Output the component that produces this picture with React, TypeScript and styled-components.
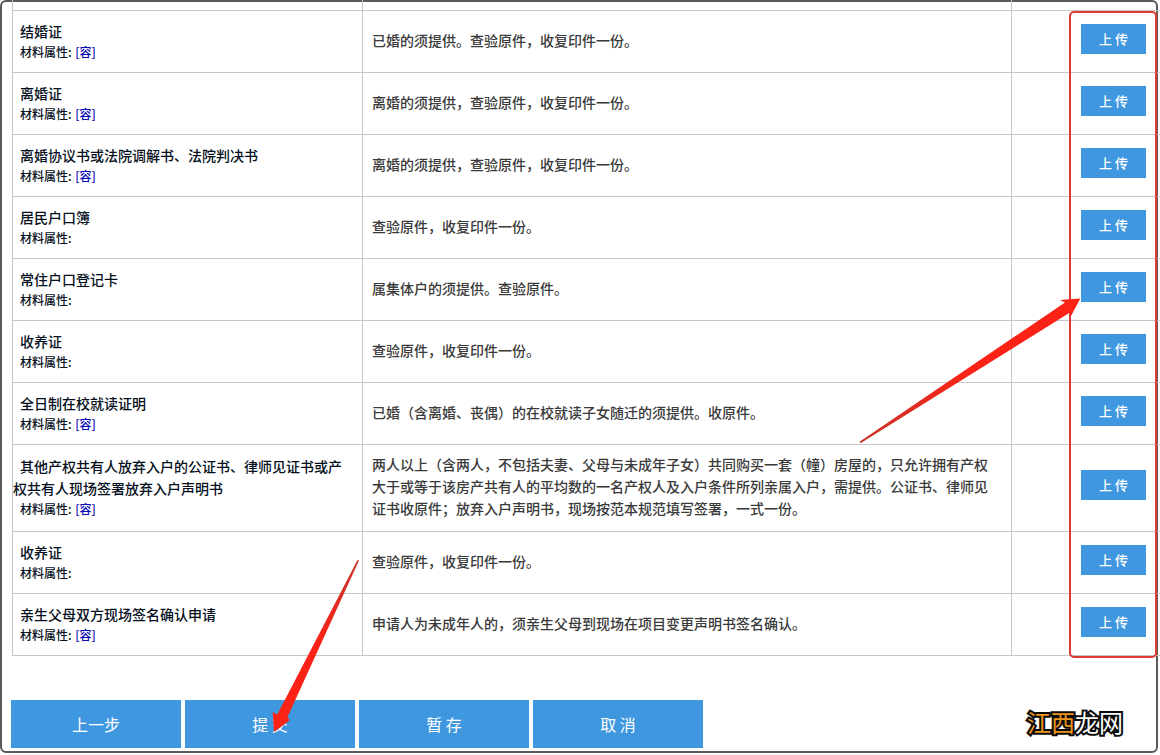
import React from "react";
import styled, { createGlobalStyle } from "styled-components";

const GlobalStyle = createGlobalStyle`
  * { box-sizing: border-box; }
  body {
    margin: 0;
    background: #fff;
    font-family: "Noto Sans CJK SC", "Microsoft YaHei", sans-serif;
  }
`;

interface Material {
  name: string;
  tag?: string;
  note: string;
}

const materials: Material[] = [
  { name: "结婚证", tag: "[容]", note: "已婚的须提供。查验原件，收复印件一份。" },
  { name: "离婚证", tag: "[容]", note: "离婚的须提供，查验原件，收复印件一份。" },
  { name: "离婚协议书或法院调解书、法院判决书", tag: "[容]", note: "离婚的须提供，查验原件，收复印件一份。" },
  { name: "居民户口簿", note: "查验原件，收复印件一份。" },
  { name: "常住户口登记卡", note: "属集体户的须提供。查验原件。" },
  { name: "收养证", note: "查验原件，收复印件一份。" },
  { name: "全日制在校就读证明", tag: "[容]", note: "已婚（含离婚、丧偶）的在校就读子女随迁的须提供。收原件。" },
  {
    name: "其他产权共有人放弃入户的公证书、律师见证书或产权共有人现场签署放弃入户声明书",
    tag: "[容]",
    note: "两人以上（含两人，不包括夫妻、父母与未成年子女）共同购买一套（幢）房屋的，只允许拥有产权大于或等于该房产共有人的平均数的一名产权人及入户条件所列亲属入户，需提供。公证书、律师见证书收原件；放弃入户声明书，现场按范本规范填写签署，一式一份。",
  },
  { name: "收养证", note: "查验原件，收复印件一份。" },
  { name: "亲生父母双方现场签名确认申请", tag: "[容]", note: "申请人为未成年人的，须亲生父母到现场在项目变更声明书签名确认。" },
];

const actions = ["上一步", "提 交", "暂 存", "取 消"];

const Page = styled.main`
  position: relative;
  min-height: 100vh;
  overflow: hidden;
`;

const Frame = styled.div`
  position: absolute;
  inset: 0 2px 2px 0;
  border: 2px solid #5a5a5a;
  border-radius: 6px;
  pointer-events: none;
`;

const TableArea = styled.section`
  position: relative;
  padding-left: 12px;
`;

const Table = styled.table`
  width: 100%;
  table-layout: fixed;
  border-spacing: 0;
  border-left: 1px solid #c6c6c6;
`;

const NameCol = styled.col`
  width: 350px;
`;

const ActionCol = styled.col`
  width: 148px;
`;

const Row = styled.tr`
  height: 62px;
`;

const StubCell = styled.td`
  height: 11px;
  padding: 0;
  border-bottom: 1px solid #c6c6c6;
  &:not(:last-child) { border-right: 1px solid #c6c6c6; }
`;

const NameCell = styled.th`
  padding: 0 10px 2px 0;
  border-right: 1px solid #c6c6c6;
  border-bottom: 1px solid #c6c6c6;
  color: #06101c;
  font-weight: 500;
  text-align: left;
  vertical-align: middle;
`;

const Name = styled.div`
  font-size: 14px;
  line-height: 22px;
  text-indent: 7px;
`;

const Attribute = styled.div`
  padding-left: 7px;
  font-size: 12px;
  line-height: 20px;
`;

const Tag = styled.span`
  margin-left: 1px;
  color: #0a0ab4;
`;

const NoteCell = styled.td`
  padding: 8px 10px 12px 9px;
  border-right: 1px solid #c6c6c6;
  border-bottom: 1px solid #c6c6c6;
  color: #3a3a3a;
  font-size: 14px;
  font-weight: 500;
  line-height: 22px;
  vertical-align: middle;
`;

const ActionCell = styled.td`
  padding: 0 14px 6px 0;
  border-bottom: 1px solid #c6c6c6;
  text-align: right;
  vertical-align: middle;
`;

const Button = styled.button`
  display: block;
  padding: 0;
  border: 0;
  background: #3f97df;
  color: #fff;
  font-family: inherit;
  cursor: pointer;
`;

const UploadButton = styled(Button)`
  width: 65px;
  height: 30px;
  margin-left: auto;
  font-size: 13px;
  font-weight: 500;
  line-height: 30px;
`;

const StepButton = styled(Button)`
  width: 170px;
  height: 48px;
  font-size: 16px;
  line-height: 48px;
`;

const Highlight = styled.div`
  position: absolute;
  top: 11px;
  right: 3px;
  bottom: -2px;
  width: 88px;
  border: 2px solid #dd3a31;
  border-radius: 5px;
  pointer-events: none;
`;

const Footer = styled.footer`
  display: flex;
  align-items: center;
  gap: 4px;
  padding: 44px 37px 7px 11px;
`;

const Brand = styled.div`
  margin-left: auto;
  color: #fff;
  font-size: 24px;
  line-height: 44px;
  padding-bottom: 4px;
  -webkit-text-stroke: 4px #0b0b0b;
  paint-order: stroke fill;
`;

const BrandAccent = styled.span`
  color: #ec941c;
`;

const UploadArrow = styled.svg`
  position: absolute;
  top: 296px;
  right: 78px;
  width: 224px;
  height: 150px;
  pointer-events: none;
`;

const SubmitArrow = styled.svg`
  position: absolute;
  top: 556px;
  left: 268px;
  width: 96px;
  height: 180px;
  pointer-events: none;
`;

export default function App() {
  return (
    <Page>
      <GlobalStyle />
      <Frame />
      <TableArea>
        <Table aria-label="申请材料">
          <colgroup>
            <NameCol />
            <col />
            <ActionCol />
          </colgroup>
          <tbody>
            <tr>
              <StubCell />
              <StubCell />
              <StubCell />
            </tr>
            {materials.map((item, index) => (
              <Row key={index}>
                <NameCell scope="row">
                  <Name>{item.name}</Name>
                  <Attribute>
                    材料属性: {item.tag && <Tag>{item.tag}</Tag>}
                  </Attribute>
                </NameCell>
                <NoteCell>{item.note}</NoteCell>
                <ActionCell>
                  <UploadButton type="button">上 传</UploadButton>
                </ActionCell>
              </Row>
            ))}
          </tbody>
        </Table>
        <Highlight />
      </TableArea>
      <Footer>
        {actions.map((label) => (
          <StepButton key={label} type="button">{label}</StepButton>
        ))}
        <Brand>
          <BrandAccent>江西</BrandAccent>龙网
        </Brand>
      </Footer>
      <UploadArrow viewBox="858 296 224 150" aria-hidden="true">
        <defs>
          <linearGradient id="upload-arrow" x1="0" y1="1" x2="1" y2="0">
            <stop offset="0" stopColor="#c8352b" />
            <stop offset="0.5" stopColor="#fb2316" />
          </linearGradient>
        </defs>
        <path
          d="M859.5 441.8 L1065 302.5 L1060 300 L1080.3 298.5 L1071 316 L1070 312.5 L860.5 443.2 Z"
          fill="url(#upload-arrow)"
        />
      </UploadArrow>
      <SubmitArrow viewBox="268 556 96 180" aria-hidden="true">
        <defs>
          <linearGradient id="submit-arrow" x1="1" y1="0" x2="0" y2="1">
            <stop offset="0" stopColor="#c8352b" />
            <stop offset="0.5" stopColor="#fb2316" />
          </linearGradient>
        </defs>
        <path
          d="M357.5 560 L277.3 714.5 L272.7 712.3 L274 732 L290 720 L287.3 717.5 L359 560.4 Z"
          fill="url(#submit-arrow)"
        />
      </SubmitArrow>
    </Page>
  );
}
